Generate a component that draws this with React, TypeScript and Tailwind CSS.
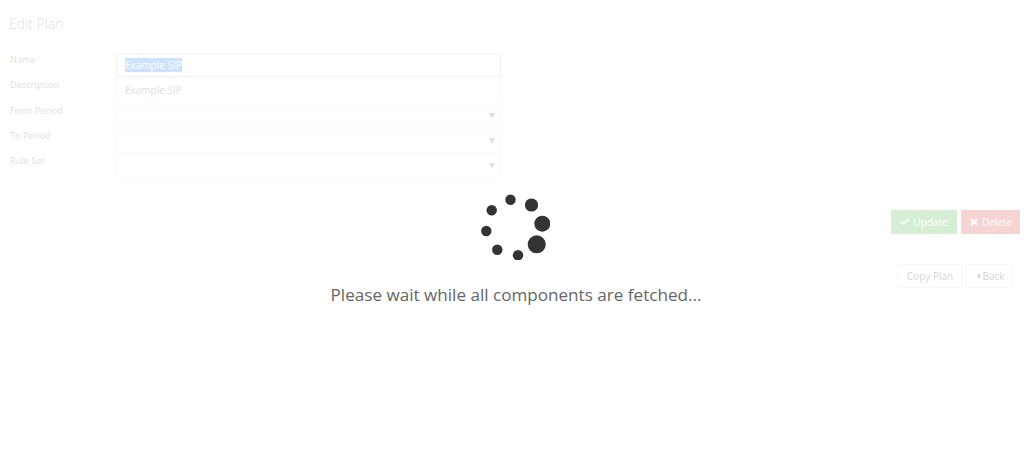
import React from 'react';
import { Check, X } from 'lucide-react';

const fields = ['Name', 'Description', 'From Period', 'To Period', 'Rule Set'];

const Caret = () => (
  <span className="absolute right-[5px] top-[8px] w-0 h-0 border-x-[3px] border-x-transparent border-t-[6px] border-t-[#888]" />
);

const Spinner = () => (
  <svg width="70" height="70" viewBox="0 0 70 70" className="text-[#333]" fill="currentColor">
    <circle cx="30.5" cy="9.7" r="5.2" />
    <circle cx="51.5" cy="15" r="6.6" />
    <circle cx="62.3" cy="33.7" r="8" />
    <circle cx="56.7" cy="54.3" r="9" />
    <circle cx="38" cy="65.3" r="5.2" />
    <circle cx="17.3" cy="59.7" r="5.2" />
    <circle cx="6.3" cy="41" r="5.2" />
    <circle cx="11.7" cy="20.3" r="5.2" />
  </svg>
);

export default function App() {
  return (
    <div className="relative w-[1024px] h-[456px] overflow-hidden bg-white font-['Open_Sans',sans-serif] antialiased">
      <div className="pt-[14px]">
        <h1 className="ml-[9px] text-[14px] leading-[20px] font-light text-[#777]">Edit Plan</h1>

        <div className="mt-[19px] flex">
          <div className="w-[116px] pl-[10px] flex flex-col text-[9.2px] text-[#777]">
            {fields.map((f) => (
              <div key={f} className="h-[25.3px] leading-[13px]">{f}</div>
            ))}
          </div>
          <div className="w-[385px] flex flex-col gap-[1.5px]">
            <div className="h-[23.8px] border border-[#ccc] px-[8px] flex items-center text-[10px] text-[#555]">
              <span className="bg-[#3390ff] text-white leading-[14px]">Example SIP</span>
            </div>
            <div className="h-[23.8px] border border-[#f0f0f0] px-[8px] flex items-center text-[10px] text-[#777]">
              Example SIP
            </div>
            {[0, 1, 2].map((i) => (
              <div key={i} className="relative h-[23.8px] border border-[#f0f0f0]">
                <Caret />
              </div>
            ))}
          </div>
        </div>

        <div className="mt-[31px] pr-[4px] flex justify-end gap-[4px]">
          <button className="w-[66px] h-[24px] bg-[#5cb85c] text-white text-[10px] flex items-center justify-center gap-[3px]">
            <Check size={10} strokeWidth={4} />
            Update
          </button>
          <button className="w-[59px] h-[24px] bg-[#d9534f] text-white text-[10px] flex items-center justify-center gap-[3px]">
            <X size={10} strokeWidth={5} />
            Delete
          </button>
        </div>

        <hr className="mt-[16px] border-[#f6f6f6]" />

        <div className="mt-[13px] pr-[11px] flex justify-end gap-[3px]">
          <button className="w-[66px] h-[24px] border border-[#ddd] text-[#555] text-[10px]">Copy Plan</button>
          <button className="w-[47px] h-[24px] border border-[#ddd] pl-[3px] text-[#555] text-[10px] flex items-center justify-center gap-[2px]">
            <span className="w-0 h-0 border-y-[3px] border-y-transparent border-r-[3px] border-r-[#555]" />
            Back
          </button>
        </div>
      </div>

      {/* loading overlay sits over the whole form */}
      <div className="absolute inset-0 bg-white/75 flex flex-col items-center pt-[190px] pl-[8px]">
        <div className="mr-[2px]">
          <Spinner />
        </div>
        <p className="mt-[23px] text-[17.1px] leading-[24px] text-[#666]">
          Please wait while all components are fetched...
        </p>
      </div>
    </div>
  );
}
